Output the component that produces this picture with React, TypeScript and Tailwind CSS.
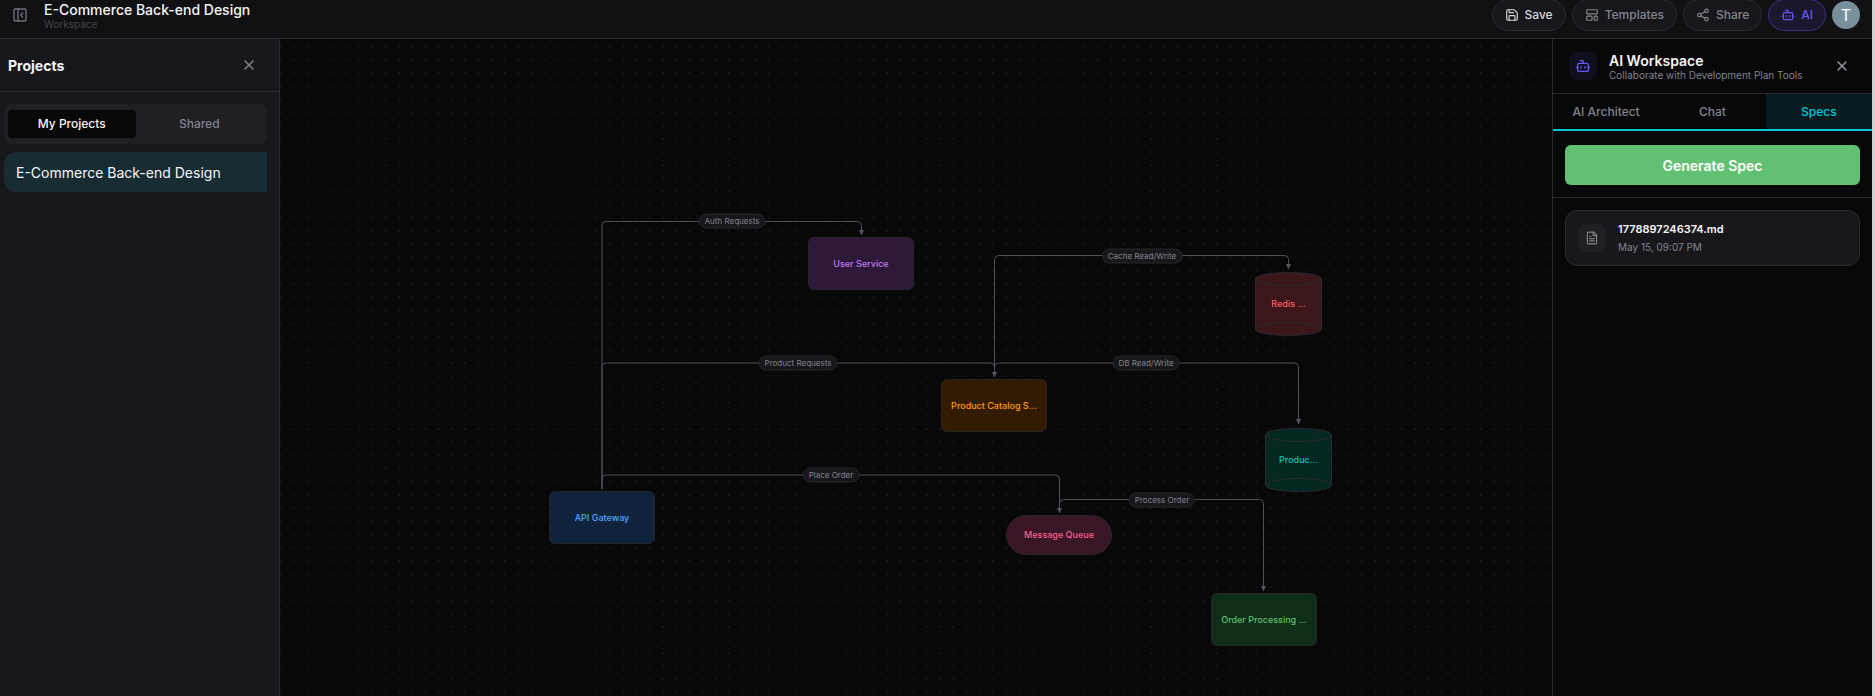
import React from "react";
import {
  Bot,
  FileText,
  LayoutTemplate,
  PanelLeftClose,
  Save,
  Share2,
  X,
} from "lucide-react";

interface DiagramNode {
  label: string;
  shape: "rect" | "pill" | "cylinder";
  box: string;
  fill: string;
}

// Positions are relative to the canvas origin
const NODES: DiagramNode[] = [
  { label: "User Service", shape: "rect", box: "left-[528px] top-[198px]", fill: "bg-[#2e1938] text-[#bf7af0]" },
  { label: "Product Catalog S…", shape: "rect", box: "left-[661px] top-[340px]", fill: "bg-[#331b00] text-[#ff990a]" },
  { label: "API Gateway", shape: "rect", box: "left-[269px] top-[452px]", fill: "bg-[#10233d] text-[#52a8ff]" },
  { label: "Message Queue", shape: "pill", box: "left-[726px] top-[476px]", fill: "bg-[#3a1726] text-[#f75f8f]" },
  { label: "Order Processing …", shape: "rect", box: "left-[931px] top-[554px]", fill: "bg-[#0f2e18] text-[#62c073]" },
  { label: "Redis …", shape: "cylinder", box: "left-[975px] top-[233px]", fill: "fill-[#3c1618] text-[#ff6166]" },
  { label: "Produc…", shape: "cylinder", box: "left-[985px] top-[389px]", fill: "fill-[#062822] text-[#0ac7b4]" },
];

const EDGES = [
  "M322 450V186.5Q322 182.5 326 182.5H577.5Q581.5 182.5 581.5 186.5V191",
  "M322 450V328Q322 324 326 324H710.5Q714.5 324 714.5 328V333",
  "M322 450V440Q322 436 326 436H775.5Q779.5 436 779.5 440V469",
  "M714.5 338V220.5Q714.5 216.5 718.5 216.5H1004.5Q1008.5 216.5 1008.5 220.5V225",
  "M714.5 338V328Q714.5 324 718.5 324H1014.5Q1018.5 324 1018.5 328V380",
  "M779.5 474V464.5Q779.5 460.5 783.5 460.5H979.5Q983.5 460.5 983.5 464.5V547",
];

const EDGE_LABELS = [
  { text: "Auth Requests", pos: "left-[452px] top-[182px]" },
  { text: "Product Requests", pos: "left-[518px] top-[324px]" },
  { text: "Cache Read/Write", pos: "left-[862px] top-[217px]" },
  { text: "DB Read/Write", pos: "left-[866px] top-[324px]" },
  { text: "Place Order", pos: "left-[551px] top-[436px]" },
  { text: "Process Order", pos: "left-[882px] top-[461px]" },
];

const ToolbarButton: React.FC<{
  icon: React.ReactNode;
  label: string;
  className: string;
}> = ({ icon, label, className }) => (
  <button
    type="button"
    className={`flex h-8 items-center gap-1.5 rounded-full border px-3 text-[12px] font-medium ${className}`}
  >
    {icon}
    {label}
  </button>
);

const Header: React.FC = () => (
  <header className="-mt-2 flex h-[47px] shrink-0 items-center border-b border-[#2b2b30] bg-[#111114] pr-3">
    <button type="button" aria-label="Close sidebar" className="ml-3 text-[#71717f]">
      <PanelLeftClose size={16} />
    </button>
    <div className="ml-4 flex flex-col pt-0.5">
      <h1 className="text-[14px] leading-4 font-medium text-[#f5f5f7]">E-Commerce Back-end Design</h1>
      <span className="text-[10px] leading-3 text-[#44444f]">Workspace</span>
    </div>
    <div className="ml-auto flex items-center gap-1.5">
      <ToolbarButton icon={<Save size={14} />} label="Save" className="border-[#2b2b30] bg-[#18181c] text-[#d6d6dc]" />
      <ToolbarButton icon={<LayoutTemplate size={14} />} label="Templates" className="border-[#2b2b30] bg-[#18181c] text-[#83838f]" />
      <ToolbarButton icon={<Share2 size={14} />} label="Share" className="border-[#2b2b30] bg-[#18181c] text-[#83838f]" />
      <ToolbarButton icon={<Bot size={14} />} label="AI" className="border-[#382f85] bg-[#1a182c] text-[#6457f9]" />
      <button
        type="button"
        className="flex size-7 items-center justify-center rounded-full bg-[#78909c] text-[16px] text-white"
      >
        T
      </button>
    </div>
  </header>
);

const ProjectsSidebar: React.FC = () => (
  <aside className="w-[280px] shrink-0 border-r border-[#2b2b30] bg-[#18181c]">
    <div className="flex h-[53px] items-center justify-between border-b border-[#2b2b30] pr-[22px] pl-2">
      <h2 className="text-[14px] font-bold text-[#f5f5f7]">Projects</h2>
      <button type="button" aria-label="Close projects" className="text-[#83838f]">
        <X size={16} />
      </button>
    </div>
    <div className="flex flex-col gap-2 py-3 pr-3 pl-1">
      <div className="flex h-10 items-center rounded-lg bg-[#1f1f24] px-1 text-[12px] font-medium">
        <button type="button" className="h-7 flex-1 rounded-sm bg-[#080809] text-[#f5f5f7]">
          My Projects
        </button>
        <button type="button" className="h-7 flex-1 text-[#83838f]">
          Shared
        </button>
      </div>
      <button
        type="button"
        className="flex h-10 items-center rounded-l-xl bg-[#182c33] px-3 text-[14px] text-[#f5f5f7]"
      >
        E-Commerce Back-end Design
      </button>
    </div>
  </aside>
);

const CanvasNode: React.FC<{ node: DiagramNode }> = ({ node }) => {
  if (node.shape === "cylinder") {
    return (
      <div className={`absolute flex h-16 w-[67px] items-center justify-center ${node.box} ${node.fill}`}>
        <svg viewBox="0 0 67 64" className="absolute inset-0 size-full" stroke="#2b2b30">
          <path d="M.5 7V57C.5 60.6 15.3 63.5 33.5 63.5S66.5 60.6 66.5 57V7" />
          <path d="M.5 57C.5 53.4 15.3 50.5 33.5 50.5S66.5 53.4 66.5 57" fill="none" />
          <ellipse cx="33.5" cy="7" rx="33" ry="6.5" />
        </svg>
        <span className="relative text-[9px] font-medium whitespace-nowrap">{node.label}</span>
      </div>
    );
  }

  return (
    <div
      className={`absolute flex w-[106px] items-center justify-center border border-[#26262b] ${
        node.shape === "pill" ? "h-10 rounded-full" : "h-[53px] rounded-md"
      } ${node.box} ${node.fill}`}
    >
      <span className="text-[9px] font-medium whitespace-nowrap">{node.label}</span>
    </div>
  );
};

const Canvas: React.FC = () => (
  <main className="relative min-w-0 flex-1 overflow-hidden bg-[#080809]">
    <svg className="absolute inset-0 size-full">
      <defs>
        <pattern id="dots" x="-6.1" y="0.9" width="13.19" height="13.19" patternUnits="userSpaceOnUse">
          <circle cx="6.6" cy="6.6" r="0.6" fill="#333338" />
        </pattern>
        <marker id="arrow" markerWidth="6" markerHeight="7" refX="0" refY="2.5" orient="auto" markerUnits="userSpaceOnUse">
          <path d="M0 0L5.5 2.5L0 5Z" fill="#575663" />
        </marker>
      </defs>
      <rect width="100%" height="100%" fill="url(#dots)" />
      {EDGES.map((d) => (
        <path key={d} d={d} fill="none" stroke="#4f4e5b" strokeWidth="1" markerEnd="url(#arrow)" />
      ))}
    </svg>
    {EDGE_LABELS.map((label) => (
      <span
        key={label.text}
        className={`absolute -translate-x-1/2 -translate-y-1/2 rounded-full border border-[#26262b] bg-[#18181c] px-[5px] text-[8px] leading-[13px] whitespace-nowrap text-[#83838f] ${label.pos}`}
      >
        {label.text}
      </span>
    ))}
    {NODES.map((node) => (
      <CanvasNode key={node.label} node={node} />
    ))}
  </main>
);

const AiWorkspace: React.FC = () => (
  <aside className="w-80 shrink-0 border-l border-[#2b2b30] bg-[#080809]">
    <div className="flex h-[55px] items-center border-b border-[#2b2b30] pr-[22px] pl-4">
      <span className="flex size-7 items-center justify-center rounded-lg bg-[#100f1e] text-[#6457f9]">
        <Bot size={16} />
      </span>
      <div className="ml-3 flex flex-col pt-0.5">
        <h2 className="text-[14px] leading-4 font-semibold text-[#f5f5f7]">AI Workspace</h2>
        <p className="text-[10px] leading-3 text-[#83838f]">Collaborate with Development Plan Tools</p>
      </div>
      <button type="button" aria-label="Close AI workspace" className="ml-auto text-[#9a9aa5]">
        <X size={16} />
      </button>
    </div>
    <div className="flex h-[37px] border-b-2 border-[#00c8d4] text-[12px] font-medium text-[#83838f]">
      <button type="button" className="flex-1">AI Architect</button>
      <button type="button" className="flex-1">Chat</button>
      <button type="button" className="flex-1 bg-[#071c20] text-[#00c8d4]">Specs</button>
    </div>
    <div className="border-b border-[#2b2b30] px-3 pt-3.5 pb-3">
      <button
        type="button"
        className="h-10 w-full rounded-md bg-[#62c073] text-[14px] font-semibold text-white"
      >
        Generate Spec
      </button>
    </div>
    <div className="p-3">
      <button
        type="button"
        className="flex h-14 w-full items-center gap-3 rounded-xl border border-[#2b2b30] bg-[#18181c] px-3 text-left"
      >
        <span className="flex size-7 items-center justify-center rounded-lg bg-[#1f1f24] text-[#83838f]">
          <FileText size={14} />
        </span>
        <span className="flex flex-col gap-1">
          <span className="text-[11px] leading-[14px] font-semibold text-[#f5f5f7]">1778897246374.md</span>
          <span className="text-[10px] leading-[14px] text-[#83838f]">May 15, 09:07 PM</span>
        </span>
      </button>
    </div>
  </aside>
);

export default function App() {
  return (
    <div className="flex h-screen flex-col overflow-hidden border-r-3 border-[#d0d0d0] bg-[#080809] font-['Inter',sans-serif]">
      <Header />
      <div className="flex min-h-0 flex-1">
        <ProjectsSidebar />
        <Canvas />
        <AiWorkspace />
      </div>
    </div>
  );
}
